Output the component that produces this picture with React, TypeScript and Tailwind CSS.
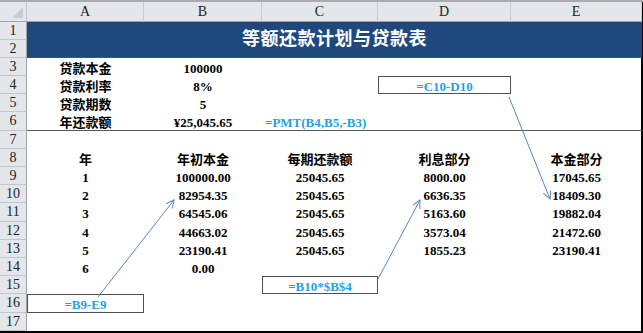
import React from "react";

const FONT = "font-['Liberation_Serif','Noto_Sans_CJK_SC',serif]";

// row heights for rows 1..17
const rowHeights = [18, 18, 18, 18, 18, 19, 18, 18, 18, 18, 19, 18, 18, 18, 18, 19, 18];

type Cell = { text?: string; box?: boolean; formula?: boolean; left?: boolean };

const blank: Cell = {};

const rows: Record<number, Cell[]> = {
  3: [{ text: "贷款本金" }, { text: "100000" }, blank, blank, blank],
  4: [{ text: "贷款利率" }, { text: "8%" }, blank, { text: "=C10-D10", box: true, formula: true }, blank],
  5: [{ text: "贷款期数" }, { text: "5" }, blank, blank, blank],
  6: [{ text: "年还款额" }, { text: "¥25,045.65" }, { text: "=PMT(B4,B5,-B3)", formula: true, left: true }, blank, blank],
  7: [blank, blank, blank, blank, blank],
  8: [{ text: "年" }, { text: "年初本金" }, { text: "每期还款额" }, { text: "利息部分" }, { text: "本金部分" }],
  9: [{ text: "1" }, { text: "100000.00" }, { text: "25045.65" }, { text: "8000.00" }, { text: "17045.65" }],
  10: [{ text: "2" }, { text: "82954.35" }, { text: "25045.65" }, { text: "6636.35" }, { text: "18409.30" }],
  11: [{ text: "3" }, { text: "64545.06" }, { text: "25045.65" }, { text: "5163.60" }, { text: "19882.04" }],
  12: [{ text: "4" }, { text: "44663.02" }, { text: "25045.65" }, { text: "3573.04" }, { text: "21472.60" }],
  13: [{ text: "5" }, { text: "23190.41" }, { text: "25045.65" }, { text: "1855.23" }, { text: "23190.41" }],
  14: [{ text: "6" }, { text: "0.00" }, blank, blank, blank],
  15: [blank, blank, { text: "=B10*$B$4", box: true, formula: true }, blank, blank],
  16: [{ text: "=B9-E9", box: true, formula: true }, blank, blank, blank, blank],
  17: [blank, blank, blank, blank, blank],
};

function RowNum({ n }: { n: number }) {
  return (
    <div className="flex items-center justify-center bg-[#e3e6ea] border-b border-[#c3c7cd] border-r border-r-[#9ea4ad] text-[14px] text-[#222] leading-none">
      {n}
    </div>
  );
}

function DataCell({ cell, underline }: { cell: Cell; underline: boolean }) {
  const base = "relative flex items-center text-[13px] font-bold leading-none whitespace-nowrap";
  const cls = [
    base,
    cell.left ? "justify-start pl-[3px]" : "justify-center",
    cell.box ? "border border-[#505050]" : "",
    underline ? "border-b border-b-[#5a5a5a]" : "",
    cell.formula ? "text-[#1ea2e6]" : "text-black",
  ].join(" ");
  return (
    <div className={cls}>
      <span className="pt-[2px]">{cell.text ?? ""}</span>
    </div>
  );
}

export default function App() {
  const gridRows = "grid-rows-[20px_18px_18px_18px_18px_18px_19px_18px_18px_18px_18px_19px_18px_18px_18px_18px_19px_18px]";
  return (
    <div className={`w-[643px] h-[333px] overflow-hidden bg-white ${FONT}`}>
      <div className="relative border-t-2 border-[#a9abaf]">
        <div className={`grid grid-cols-[27px_117px_118px_116px_133px_131px] ${gridRows} border-r-2 border-r-black border-b-2 border-b-black w-[643px]`}>
          {/* column headers */}
          <div className="relative bg-[#e3e6ea] border-b border-[#9ea4ad] border-r border-r-[#c3c7cd]">
            <div className="absolute right-[3px] bottom-[3px] w-0 h-0 border-l-[11px] border-l-transparent border-b-[11px] border-b-[#c9ccd1]" />
          </div>
          {["A", "B", "C", "D", "E"].map((c) => (
            <div
              key={c}
              className="flex items-center justify-center bg-[#e3e6ea] border-b border-[#9ea4ad] border-r border-r-[#c8ccd2] text-[14px] text-[#222] leading-none"
            >
              {c}
            </div>
          ))}

          {/* rows 1-2 title */}
          <RowNum n={1} />
          <div className="row-span-2 col-span-5 bg-[#1f487c] border-b border-b-[#30598c] flex items-center justify-center text-white font-bold text-[18px] tracking-[0.5px]">
            等额还款计划与贷款表
          </div>
          <RowNum n={2} />

          {Array.from({ length: 15 }, (_, i) => i + 3).map((r) => (
            <React.Fragment key={r}>
              <RowNum n={r} />
              {rows[r].map((cell, ci) => (
                <DataCell key={ci} cell={cell} underline={r === 6} />
              ))}
            </React.Fragment>
          ))}
        </div>

        {/* arrows */}
        <svg className="absolute inset-0 pointer-events-none" width="643" height="333" viewBox="0 -2 643 333">
          <defs>
            <marker id="ah" markerWidth="10" markerHeight="10" refX="8" refY="4" orient="auto" markerUnits="userSpaceOnUse">
              <path d="M0,0 L8,4 L0,8" fill="none" stroke="#5b86c4" strokeWidth="1" />
            </marker>
          </defs>
          <line x1="98" y1="293" x2="174" y2="196" stroke="#5b86c4" strokeWidth="1" markerEnd="url(#ah)" />
          <line x1="378" y1="275" x2="420" y2="196" stroke="#5b86c4" strokeWidth="1" markerEnd="url(#ah)" />
          <line x1="509" y1="93" x2="550" y2="195" stroke="#5b86c4" strokeWidth="1" markerEnd="url(#ah)" />
        </svg>
      </div>
    </div>
  );
}
